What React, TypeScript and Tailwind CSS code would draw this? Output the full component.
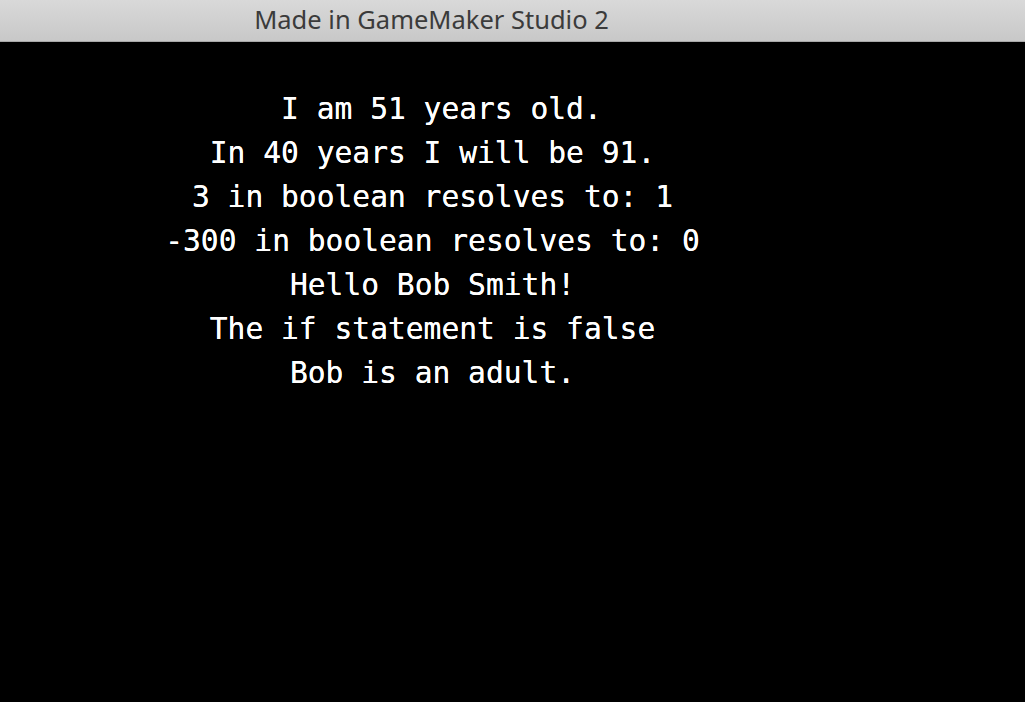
import React from "react";

const lines = [
  " I am 51 years old.",
  "In 40 years I will be 91.",
  "3 in boolean resolves to: 1",
  "-300 in boolean resolves to: 0",
  "Hello Bob Smith!",
  "The if statement is false",
  "Bob is an adult.",
];

export default function App() {
  return (
    <div className="w-[1025px] h-[702px] overflow-hidden bg-black flex flex-col">
      {/* title bar */}
      <div className="h-[42px] shrink-0 bg-gradient-to-b from-[#d9d9d9] to-[#c8c8c8] border-b border-[#a8a8a8] flex">
        <div className="w-[863px] flex items-center justify-center text-[25.5px] text-[#3b3b3b] font-['Noto_Sans',sans-serif] leading-none pb-[1px]">
          Made in GameMaker Studio 2
        </div>
      </div>

      {/* game surface */}
      <div className="flex-1 flex">
        <div className="w-[865px] pt-[45px] flex flex-col items-center text-white font-['DejaVu_Sans_Mono',monospace] text-[29.6px] leading-[44px] [text-shadow:0_0_0.6px_#fff]">
          {lines.map((l) => (
            <div key={l} className="whitespace-pre">
              {l}
            </div>
          ))}
        </div>
      </div>
    </div>
  );
}
